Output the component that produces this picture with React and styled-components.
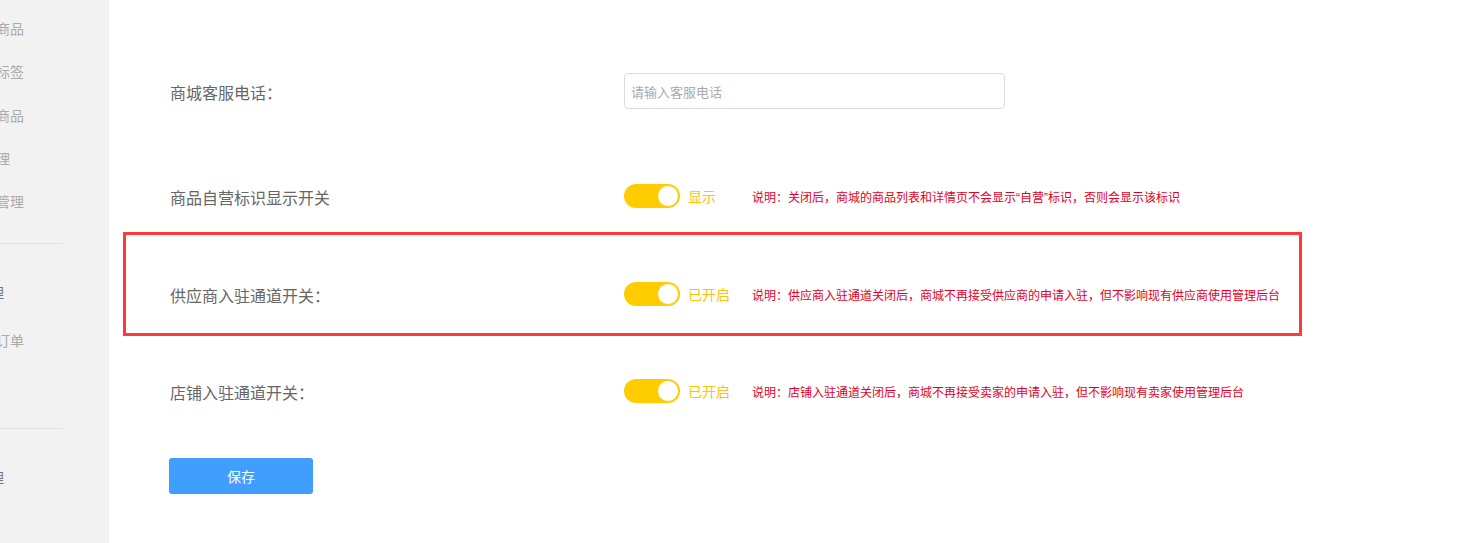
import React from "react";
import styled, { createGlobalStyle } from "styled-components";

const GlobalStyle = createGlobalStyle`
    body {
        margin: 0;
        font-family: "Noto Sans CJK SC", "Noto Sans", sans-serif;
        background: #fff;
    }
`

export const Page = styled.div`
    display: flex;
    min-height: 543px;
`

export const Sidebar = styled.div`
    width: 109px;
    flex-shrink: 0;
    background: #f2f2f2;
    overflow: hidden;
    padding-top: 18px;
    box-sizing: border-box;
`

export const NavItem = styled.div`
    line-height: 20px;
    font-size: 14px;
    white-space: nowrap;
    color: ${props => props.$head ? "#777" : "#aaa"};
    margin-left: ${props => props.$shift}px;
    height: ${props => props.$tall ? 48 : 43.3}px;
`

export const Divider = styled.div`
    width: 63px;
    height: 1px;
    background: #e2e2e2;
    margin: ${props => props.$space};
`

export const Main = styled.div`
    flex: 1;
    padding: 73px 0 0 61px;
`

export const Form = styled.div`
    display: flex;
    flex-direction: column;
`

export const Row = styled.div`
    position: relative;
    display: flex;
    align-items: center;
    height: 36px;
    margin-bottom: ${props => props.$gap}px;
`

export const Label = styled.div`
    width: 454px;
    flex-shrink: 0;
    font-size: 16px;
    color: #666;
    padding-top: 1px;
`

export const Input = styled.input`
    width: 381px;
    height: 36px;
    box-sizing: border-box;
    border: 1px solid #dcdcdc;
    border-radius: 4px;
    padding: 0 6px;
    font-size: 13px;
    font-family: inherit;
    color: #333;
    outline: none;
    &::placeholder {
        color: #aaa;
    }
`

export const Switch = styled.div`
    position: relative;
    width: 56px;
    height: 24px;
    border-radius: 12px;
    background: #ffcc00;
    flex-shrink: 0;
    &::after {
        content: "";
        position: absolute;
        top: 1px;
        right: 1px;
        width: 20px;
        height: 20px;
        border-radius: 50%;
        background: #fff;
        border: 1px solid #ffcc00;
    }
`

export const Status = styled.span`
    width: 72px;
    box-sizing: border-box;
    padding-left: 8px;
    font-size: 14px;
    color: #ffc300;
`

export const Note = styled.span`
    font-family: "Liberation Sans", "Noto Sans CJK SC", sans-serif;
    font-size: 12px;
    color: #e4001e;
`

export const Highlight = styled.div`
    position: absolute;
    left: -47px;
    top: -44px;
    width: 1179px;
    height: 104px;
    box-sizing: border-box;
    border: 3px solid #ff3838;
    pointer-events: none;
`

export const SaveButton = styled.button`
    width: 144px;
    height: 36px;
    margin-left: -1px;
    border: none;
    border-radius: 3px;
    background: #409eff;
    color: #fff;
    font-size: 14px;
    font-family: inherit;
    cursor: pointer;
`

const switches = [
    {
        label: "商品自营标识显示开关",
        status: "显示",
        note: "说明：关闭后，商城的商品列表和详情页不会显示“自营”标识，否则会显示该标识",
        gap: 62
    },
    {
        label: "供应商入驻通道开关：",
        status: "已开启",
        note: "说明：供应商入驻通道关闭后，商城不再接受供应商的申请入驻，但不影响现有供应商使用管理后台",
        gap: 61,
        marked: true
    },
    {
        label: "店铺入驻通道开关：",
        status: "已开启",
        note: "说明：店铺入驻通道关闭后，商城不再接受卖家的申请入驻，但不影响现有卖家使用管理后台",
        gap: 49
    }
]

export default class App extends React.Component {
    render() {
        return (
            <>
                <GlobalStyle />
                <Page>
                    <Sidebar>
                        <NavItem $shift={-32}>全部商品</NavItem>
                        <NavItem $shift={-32}>商品标签</NavItem>
                        <NavItem $shift={-32}>审核商品</NavItem>
                        <NavItem $shift={-32}>库管理</NavItem>
                        <NavItem $shift={-32}>评价管理</NavItem>
                        <Divider $space="9px 0 38px" />
                        <NavItem $head $shift={-38} $tall>订单理</NavItem>
                        <NavItem $shift={-32} $tall>全部订单</NavItem>
                        <NavItem $shift={-32} $tall></NavItem>
                        <Divider $space="2px 0 38px" />
                        <NavItem $head $shift={-38}>结算理</NavItem>
                    </Sidebar>
                    <Main>
                        <Form>
                            <Row $gap={69}>
                                <Label>商城客服电话：</Label>
                                <Input placeholder="请输入客服电话" />
                            </Row>
                            {switches.map(item => (
                                <Row key={item.label} $gap={item.gap}>
                                    {item.marked && <Highlight />}
                                    <Label>{item.label}</Label>
                                    <Switch />
                                    <Status>{item.status}</Status>
                                    <Note>{item.note}</Note>
                                </Row>
                            ))}
                            <div>
                                <SaveButton>保存</SaveButton>
                            </div>
                        </Form>
                    </Main>
                </Page>
            </>
        );
    }
}
